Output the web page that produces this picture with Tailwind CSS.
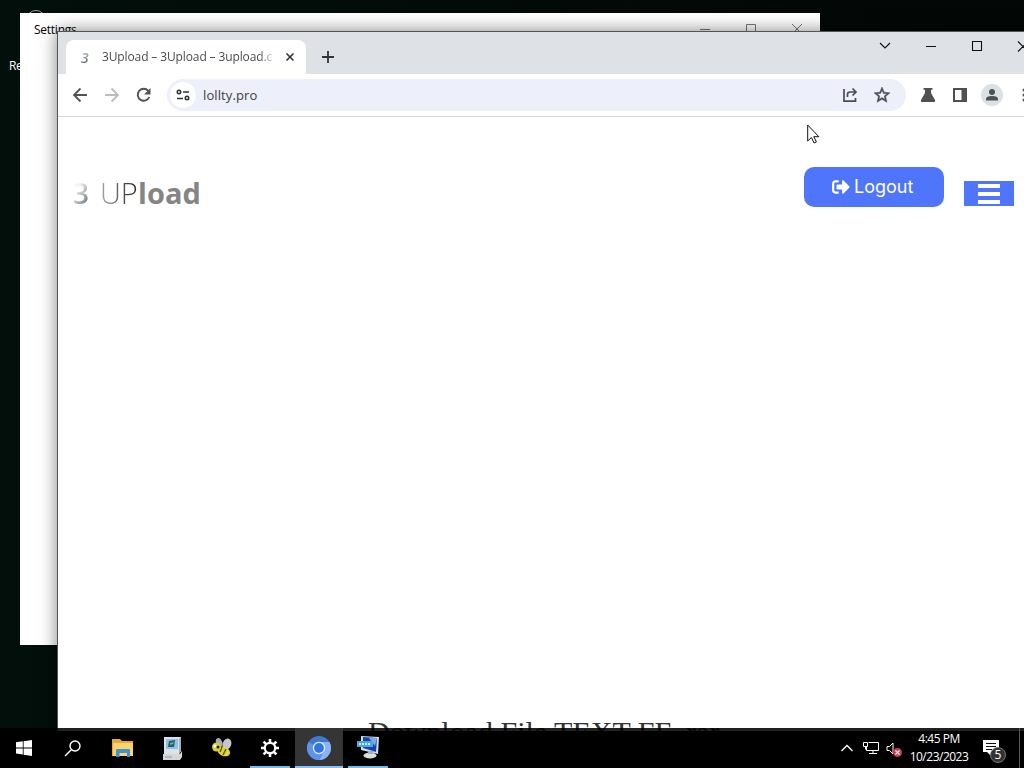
<!DOCTYPE html>
<html lang="en">
<head>
    <meta charset="UTF-8">
    <meta name="viewport" content="width=device-width, initial-scale=1.0">
    <title>3Upload</title>
    <script src="https://cdn.jsdelivr.net/npm/@tailwindcss/browser@4"></script>
</head>
<body class="bg-[#020b08] overflow-hidden">
<div class="relative w-[1024px] h-[768px] overflow-hidden bg-linear-to-r from-[#020f0b] to-[#030706] font-['Open_Sans',sans-serif]">

    <!-- Desktop icon behind the windows -->
    <div class="absolute left-[26px] top-[10px] w-5 h-5 rounded-full border border-gray-400"></div>
    <div class="absolute left-[9px] top-[58px] text-[12px] leading-4 tracking-[-0.5px] text-white">Recycle Bin</div>

    <!-- Settings window -->
    <div class="absolute left-[20px] top-[13px] w-[800px] h-[632px] bg-white">
        <div class="flex justify-between h-8 pl-[14px]">
            <span class="pt-[9px] text-[12px] leading-4 tracking-[-0.25px] text-black">Settings</span>
            <svg width="120" height="32" fill="none" stroke="#777" stroke-width="1">
                <path d="M0 16.5h10M46.500 11.500h9v9h-9zM92 11l10 10M102 11l-10 10"/>
            </svg>
        </div>
    </div>

    <!-- Browser window -->
    <div class="absolute left-[57px] top-[31px] w-[1000px] h-[720px] bg-white border-l border-t border-[#555] shadow-[0_0_16px_rgba(0,0,0,0.5)]">
        <!-- Tab strip -->
        <div class="flex h-[42px] bg-[#dee1e6]">
            <div class="flex items-center mt-2 ml-2 w-[240px] h-[34px] pl-[15px] rounded-t-lg bg-white">
                <span class="w-[21px] pt-[2px] text-[14px] leading-4 italic font-semibold bg-linear-to-b from-gray-300 to-gray-600 bg-clip-text text-transparent">3</span>
                <span class="w-[171px] whitespace-nowrap text-[12px] leading-5 tracking-[-0.12px] bg-linear-to-r from-[#444] from-92% to-[#ddd] bg-clip-text text-transparent">3Upload – 3Upload – 3upload.cc</span>
                <svg class="ml-[12px]" width="10" height="10" stroke="#333" stroke-width="1.600"><path d="M1.500 1.500l7 7M8.500 1.500l-7 7"/></svg>
            </div>
            <svg class="mt-[18px] ml-[15px]" width="14" height="14" stroke="#333" stroke-width="1.800"><path d="M7 1v12M1 7h12"/></svg>
            <svg class="ml-auto" width="184" height="42" fill="none" stroke="#111" stroke-width="1.100">
                <path d="M7 11l5 5 5-5"/>
                <path d="M53 14.500h10M99.500 9.500h9v9h-9zM145 9.500l10 10M155 9.500l-10 10"/>
            </svg>
        </div>
        <!-- Toolbar -->
        <div class="flex items-center h-[43px] pl-[14px] border-b border-[#d5d5d8]">
            <svg width="16" height="16" fill="none" stroke="#505357" stroke-width="1.800"><path d="M15 8H2M8.500 1.500L2 8l6.500 6.500"/></svg>
            <svg class="ml-4" width="16" height="16" fill="none" stroke="#babcbe" stroke-width="1.800"><path d="M1 8h13M7.500 1.500L14 8l-6.500 6.500"/></svg>
            <svg class="ml-4" width="16" height="16" viewBox="0 0 16 16"><path d="M13.300 10A6 6 0 1 1 12.300 3.800" fill="none" stroke="#505357" stroke-width="1.900"/><path d="M14.500 1v6.500H8z" fill="#505357"/></svg>
            <div class="flex items-center ml-[15px] w-[739px] h-[32px] rounded-full bg-[#edeffa] pl-[3px]">
                <div class="flex items-center justify-center w-[26px] h-[26px] rounded-full bg-white">
                    <svg width="14" height="12" fill="none" stroke="#303236" stroke-width="1.600"><circle cx="3" cy="3" r="1.700"/><path d="M7 3h6M1 9.500h6"/><circle cx="11" cy="9" r="1.700"/></svg>
                </div>
                <span class="ml-[7px] text-[13px] leading-5 tracking-[0.1px] text-[#3c4043]">lollty.pro</span>
                <svg class="ml-auto" width="16" height="16" fill="none" stroke="#4a4d51" stroke-width="1.700"><path d="M2 2v12.200h11.500V11M5.500 10V7.500Q5.500 5 8 5h5M10.500 1.500L14 5l-3.500 3.500"/></svg>
                <svg class="ml-4 mr-4" width="16" height="16" viewBox="0 0 24 24" fill="#4a4d51" stroke="#4a4d51" stroke-width="0.700"><path d="M24 8.700l-8.600-.8L12 0 8.600 7.900 0 8.700l6.500 5.700L4.600 23 12 18.400 19.400 23l-1.900-8.600zM12 15.900l-4.500 2.700 1.200-5.100-4-3.500 5.200-.4L12 4.700l2.100 4.900 5.200.4-4 3.500 1.200 5.100z"/></svg>
            </div>
            <svg class="ml-[14px]" width="16" height="16" fill="#4d5054"><path d="M3.500 1h9v1.800H11V6l4 7q.7 2-1.500 2h-11Q.3 15 1 13l4-7V2.800H3.500z"/></svg>
            <svg class="ml-4" width="16" height="16"><path fill="#4d5054" fill-rule="evenodd" d="M1 1h14v14H1zM3 3v10h6.500V3z"/></svg>
            <svg class="ml-[13px]" width="22" height="22"><circle cx="11" cy="11" r="11" fill="#dbe2e6"/><circle cx="11" cy="8" r="3" fill="#4d5054"/><path d="M5 16.500v-1.500q0-3 6-3t6 3v1.500z" fill="#4d5054"/></svg>
            <svg class="ml-[19px]" width="4" height="16" fill="#4d5054"><circle cx="2" cy="3" r="1.500"/><circle cx="2" cy="8" r="1.500"/><circle cx="2" cy="13" r="1.500"/></svg>
        </div>
        <!-- Page header -->
        <div class="flex h-[96px] w-[966px] pt-[50px] pl-[15px] pr-[10px]">
            <div class="flex items-baseline pt-[7px] text-[29px] leading-[38px] whitespace-nowrap">
                <span class="w-[27px] text-[28px] font-semibold bg-linear-to-br from-gray-100 from-25% to-gray-600 to-80% bg-clip-text text-transparent">3</span>
                <span class="w-[38px] bg-linear-to-r from-[#aaa] to-[#222] bg-clip-text text-transparent font-light">UP</span>
                <span class="font-bold tracking-[0.1px] text-[#858585]">load</span>
            </div>
            <button class="flex items-center ml-auto w-[140px] h-10 rounded-[10px] bg-[#4f75fa] pl-7 text-white">
                <svg width="18" height="14" viewBox="0 0 512 400" fill="#fff"><path d="M497 217L329 385c-15 15-41 4-41-17v-96H152c-13 0-24-11-24-24V152c0-13 11-24 24-24h136V32c0-21 26-32 41-17l168 168c9 9 9 25 0 34zM192 380v-40c0-7-5-12-12-12H96c-18 0-32-14-32-32V104c0-18 14-32 32-32h84c7 0 12-5 12-12V20c0-7-5-12-12-12H96C43 8 0 51 0 104v192c0 53 43 96 96 96h84c7 0 12-5 12-12z"/></svg>
                <span class="ml-[4px] font-['Inter',sans-serif] text-[18px] leading-6">Logout</span>
            </button>
            <div class="flex flex-col items-center ml-5 mt-[14px] w-[50px] h-[25px] pt-[3px] gap-[4px] bg-[#4f75fa]">
                <div class="w-[22px] h-[4px] bg-white"></div>
                <div class="w-[22px] h-[4px] bg-white"></div>
                <div class="w-[22px] h-[4px] bg-white"></div>
            </div>
        </div>
        <h2 class="mt-[502px] ml-[310px] font-['Liberation_Serif',serif] text-[30px] leading-[34px] whitespace-nowrap text-[#333]">Download File TEXT FF .rar</h2>
    </div>

    <!-- Mouse pointer -->
    <svg class="absolute left-[807px] top-[124px]" width="13" height="20" fill="#fff" stroke="#111"><path d="M.7 1v16l3.700-3.500 2.700 5.500 2.300-1-2.600-5.300h5z"/></svg>

    <!-- Taskbar -->
    <div class="absolute left-0 top-[728px] w-[1024px] h-[3px] bg-black/87"></div>
    <div class="absolute left-0 top-[731px] w-[1024px] h-[37px] bg-black"></div>
    <div class="absolute left-0 top-[728px] flex w-[1024px] h-10 text-white">
        <div class="flex items-center justify-center w-12">
            <svg width="16" height="16" fill="#fff"><path d="M0 2.300L6.800 1.300v6.200H0zM7.600 1.200L16 0v7.500H7.600zM0 8.400h6.800v6.200L0 13.600zM7.600 8.400H16V16l-8.400-1.200z"/></svg>
        </div>
        <div class="flex items-center justify-center w-12">
            <svg width="17" height="17" fill="none" stroke="#fff" stroke-width="1.400"><circle cx="11" cy="6" r="5"/><path d="M7.300 9.700L1 16"/></svg>
        </div>
        <div class="flex items-center justify-center w-[54px]">
            <svg width="22" height="20"><path d="M0 1h8l2 2h11v15H0z" fill="#e3ab3c"/><path d="M1 5h20v13H1z" fill="#ffd36b"/><path d="M4 19v-7q0-1 1-1h12q1 0 1 1v7h-3v-4H7.500v4z" fill="#3d94d1"/></svg>
        </div>
        <div class="flex items-center justify-center w-[44px]">
            <svg width="21" height="25"><path d="M2 1h17v14l-2 3H2z" fill="#dfe2e5"/><path d="M17 3l2-2v14l-2 3z" fill="#a8adb2"/><path d="M4 3h12v10H4z" fill="#8cc0ee"/><path d="M7 5l6-1-1 7-6 0z" fill="#235e75"/><path d="M8 7l4-1-1 2-3 1z" fill="#7fb15b"/><path d="M1 18h17l2-3v6l-2 3H1z" fill="#d4d7d8"/><path d="M3 21h7" stroke="#999"/></svg>
        </div>
        <div class="flex items-center justify-center w-[56px]">
            <svg width="22" height="20"><ellipse cx="8" cy="4.500" rx="3" ry="4.500" fill="#a9adb5" transform="rotate(-25 8 4)"/><ellipse cx="16" cy="6" rx="4.200" ry="5.500" fill="#c3c7d0" transform="rotate(20 16 6)"/><ellipse cx="13" cy="13.500" rx="6.500" ry="4.500" fill="#e4d72d" transform="rotate(22 13 13)"/><path d="M11 9l-2 5M15 11l-3 6" stroke="#5a5418" stroke-width="1.500"/><circle cx="5.500" cy="9" r="4.500" fill="#d9cf30"/><circle cx="4" cy="8" r="1.500" fill="#fff"/><circle cx="7" cy="9" r="1.500" fill="#222"/></svg>
        </div>
        <div class="flex items-center justify-center w-10 pt-[2px] border-b-2 border-[#76b9ed]">
            <svg width="18" height="18" viewBox="-9 -9 18 18"><circle r="5.200" fill="none" stroke="#fff" stroke-width="2.200"/><path d="M0-9v4M0 9V5M-9 0h4M9 0H5M-6.400-6.400l2.800 2.800M6.400 6.400L3.600 3.600M-6.400 6.400l2.800-2.800M6.400-6.400L3.600-3.600" stroke="#fff" stroke-width="2.600"/></svg>
        </div>
        <div class="flex items-center justify-center ml-[5px] w-12 pt-[2px] border-b-2 border-[#82c3f5] bg-[#353535]">
            <svg width="24" height="24"><circle cx="12" cy="12" r="12" fill="#3f78d2"/><path d="M12 6h10.400A12 12 0 0 1 12 24l5.200-9z" fill="#8bb2f2"/><path d="M1.600 6A12 12 0 0 0 12 24l5-9z" fill="#5d94e8"/><circle cx="12" cy="12" r="6.200" fill="#e2edff"/><circle cx="12" cy="12" r="4.900" fill="#2f76dd"/></svg>
        </div>
        <div class="flex items-center justify-center ml-[5px] w-10 border-b-2 border-[#76b9ed]">
            <svg width="24" height="24"><path d="M5 1l18 1-1 17L5 15z" fill="#d5dce5"/><path d="M7 2l14 1-1 14L7 13z" fill="#1744b5"/><path d="M13 3l8 0-2 8z" fill="#7da7e8"/><path d="M1 6h16v6H1z" fill="#49a8df"/><path d="M3 9h12" stroke="#c6eaff" stroke-width="2" stroke-dasharray="2 1"/><ellipse cx="14" cy="20.500" rx="6.500" ry="3" fill="#dededb"/><path d="M12 16h5v3h-5z" fill="#aab0b5"/></svg>
        </div>
        <!-- System tray -->
        <div class="flex items-center ml-auto pr-[17px]">
            <svg width="12" height="8" fill="none" stroke="#fff" stroke-width="1.300"><path d="M.5 7L6 1.500 11.500 7"/></svg>
            <svg class="ml-[10px]" width="16" height="14" fill="none" stroke="#fff"><path d="M5.500 1.500h10v8h-12V6M10 9.500v3M6 12.500h8M.5 1.500h4v4h-4zM2.500 5.500v3"/></svg>
            <svg class="ml-[7px] mt-[3px]" width="17" height="16"><path d="M1 4.500h2.500L7 1v11L3.500 8.500H1z" fill="none" stroke="#fff"/><circle cx="11.500" cy="10.500" r="4.500" fill="#ce3a4c"/><path d="M9.500 8.500l4 4M13.500 8.500l-4 4" stroke="#fff" stroke-width="1.200"/></svg>
            <div class="ml-[6px] w-[60px] flex flex-col items-center text-[12px] leading-[18px] whitespace-nowrap">
                <span class="tracking-[-0.500px]">4:45 PM</span>
                <span class="tracking-[-0.500px]">10/23/2023</span>
            </div>
            <div class="relative ml-[14px] w-[24px] h-6">
                <svg class="mt-[4px]" width="17" height="17"><path d="M0 0h16v12H8v4l-4-4H0z" fill="#fff"/><path d="M3 3.500h10M3 6.500h10M3 9.500h6" stroke="#111"/></svg>
                <div class="absolute left-[7px] top-[11px] flex items-center justify-center w-4 h-4 rounded-full border border-[#777] bg-[#333] text-[12px] leading-none">5</div>
            </div>
        </div>
        <div class="absolute right-[4px] top-0 w-px h-10 bg-[#555]"></div>
    </div>
</div>
</body>
</html>
